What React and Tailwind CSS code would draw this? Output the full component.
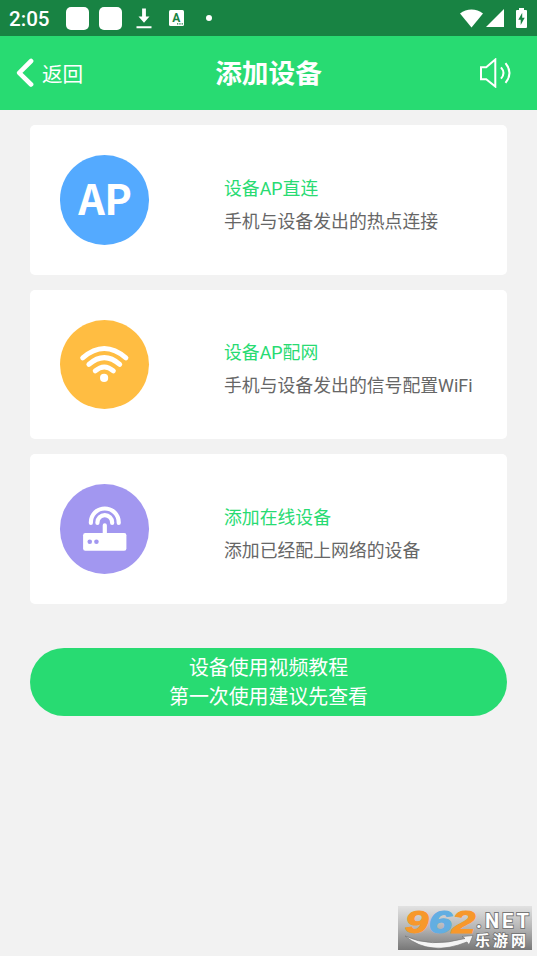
import React from "react";

function StatusBar() {
  return (
    <div className="flex h-9 items-center bg-[#188343] text-white">
      <span className="ml-[9px] w-[57px] pt-px text-[20.6px] leading-9 font-medium">2:05</span>
      <span className="size-[23px] rounded-[5px] bg-white" />
      <span className="ml-[10px] size-[23px] rounded-[5px] bg-white" />
      <svg className="ml-[14px]" width="16" height="22" viewBox="0 0 16 22" fill="white">
        <path d="M6.1 1.5h3.8v8h3.6L8 15.7 2.5 9.5h3.6zM.5 19.3h15v2H.5z" />
      </svg>
      <svg className="ml-[17px]" width="15" height="16" viewBox="0 0 15 16">
        <rect width="15" height="16" rx="1.5" fill="white" />
        <text x="3.3" y="12" fontSize="12" fontWeight="700" fill="#188343">A</text>
        <path d="M8 13.3h1.3v1.3H8zM10.3 13.3h1.3v1.3h-1.3zM12.6 13.3h1.3v1.3h-1.3z" fill="#188343" />
      </svg>
      <span className="ml-[22px] size-[6px] rounded-full bg-white" />
      <svg className="ml-auto" width="23" height="19" viewBox="0 0 23 19" fill="white">
        <path d="M0 4.4C6.6-.9 16.4-.9 23 4.4L11.5 18.5z" />
      </svg>
      <svg className="ml-[3px]" width="18" height="18" viewBox="0 0 18 18" fill="white">
        <path d="M18 0v18H0z" />
      </svg>
      <svg className="mr-[10px] ml-[12px]" width="11" height="20" viewBox="0 0 11 20">
        <path d="M3 0h5v2h2q1 0 1 1v16q0 1-1 1H1q-1 0-1-1V3q0-1 1-1h2z" fill="white" />
        <path d="M6.2 4.8v5h2.5l-4 7.2v-5.3H2.3z" fill="#188343" />
      </svg>
    </div>
  );
}

function Header() {
  return (
    <header className="grid h-[74.4px] grid-cols-[1fr_auto_1fr] items-center bg-[#28db72] text-white">
      <div className="flex items-center">
        <svg className="ml-4" width="18" height="30" viewBox="0 0 18 30" fill="none">
          <path d="M15.1 3 3.2 14.8 15.1 26.5" stroke="white" strokeWidth="4.6" strokeLinecap="round" strokeLinejoin="round" />
        </svg>
        <span className="ml-[8px] pt-[4px] text-[20.6px] leading-7">返回</span>
      </div>
      <h1 className="pt-[2px] text-[26.7px] leading-9 font-bold">添加设备</h1>
      <svg className="mr-[25px] justify-self-end" width="33" height="30" viewBox="0 0 33 30" fill="none" stroke="white" strokeWidth="2">
        <path d="M2 9.2h5.2L16.3 1.5v27L7.2 21.2H2z" />
        <path d="M22 9.3q5 5.7 0 11.4M26.5 5.2q8 9.8 0 19.6" />
      </svg>
    </header>
  );
}

function WifiIcon() {
  return (
    <svg width="90" height="90" viewBox="0 0 90 90" fill="none" stroke="white" strokeWidth="5" strokeLinecap="round">
      <path d="M22.8 38.8q21.7-18.8 43.4 0M29 45.3q15.5-13.5 31 0M35.4 52q9.1-8 18.2 0" />
      <circle cx="44.3" cy="59" r="4.1" fill="white" stroke="none" />
    </svg>
  );
}

function RouterIcon() {
  return (
    <svg width="90" height="90" viewBox="0 0 90 90" fill="none" stroke="white" strokeWidth="4.2" strokeLinecap="round">
      <path d="M31 39v-.6a14 14 0 0 1 28 0V39M37.6 39v-.6a7.4 7.4 0 0 1 14.8 0V39M45 41.3V52" />
      <rect x="23.2" y="49" width="43.5" height="17.8" rx="2.2" fill="white" stroke="none" />
      <g fill="#a297f0" stroke="none">
        <circle cx="29.9" cy="57.8" r="2.3" />
        <circle cx="36.6" cy="57.8" r="2.3" />
      </g>
    </svg>
  );
}

function Card({ color, icon, title, text }) {
  return (
    <section className="flex h-[149.4px] items-center rounded-[5px] bg-white pl-[29.6px]">
      <div className={`flex size-[89.6px] shrink-0 items-center justify-center rounded-full ${color}`}>{icon}</div>
      <div className="ml-[74.8px] flex flex-col gap-[5px] pt-[11px] text-[17.85px] leading-7 whitespace-nowrap">
        <h2 className="text-[#28db72]">{title}</h2>
        <p className="text-[#666666]">{text}</p>
      </div>
    </section>
  );
}

function Watermark() {
  return (
    <svg className="absolute right-[5px] bottom-[6px] overflow-visible" width="134" height="44" viewBox="0 0 134 44">
      <defs>
        <linearGradient id="plate" x1="0" y1="0" x2="0" y2="1">
          <stop offset="0" stopColor="#e2e2e2" />
          <stop offset="0.5" stopColor="#b5b5b5" />
          <stop offset="1" stopColor="#777777" />
        </linearGradient>
      </defs>
      <rect width="134" height="44" fill="url(#plate)" />
      <path d="M7 30q25 12 60 2.5l-3-2 11-1-4 9.5-2-3Q32 51 7 30z" fill="#f4f4f4" stroke="#777" strokeWidth="0.7" />
      <g className="font-['Liberation_Sans',sans-serif]" transform="translate(7 26.5) scale(1.36 1)">
        <text fontWeight="700" fontStyle="italic" fontSize="31" strokeWidth="1">
          <tspan fill="#f7982b" stroke="#f7982b">9</tspan>
          <tspan fill="#62aee2" stroke="#62aee2">6</tspan>
          <tspan fill="#f7982b" stroke="#f7982b">2</tspan>
        </text>
      </g>
      <g fill="white" stroke="#777777" strokeWidth="1.8" paintOrder="stroke" fontWeight="700">
        <text x="78" y="21.5" fontSize="20" textLength="53" lengthAdjust="spacing">.NET</text>
        <text x="77" y="40" fontSize="15" textLength="51">乐游网</text>
      </g>
    </svg>
  );
}

export default function App() {
  return (
    <div className="relative flex h-[956px] w-[537px] flex-col overflow-hidden bg-[#f2f2f2] font-[Roboto,'Noto_Sans_CJK_SC',sans-serif]">
      <StatusBar />
      <Header />
      <main className="flex flex-col gap-[15px] px-[30px] pt-[15px]">
        <Card
          color="bg-[#54aaff]"
          icon={<span className="pb-[5px] pl-px font-['Noto_Sans_CJK_SC',sans-serif] text-[41.5px] leading-none font-bold tracking-[-0.5px] text-white">AP</span>}
          title="设备AP直连"
          text="手机与设备发出的热点连接"
        />
        <Card color="bg-[#ffbd42]" icon={<WifiIcon />} title="设备AP配网" text="手机与设备发出的信号配置WiFi" />
        <Card color="bg-[#a297f0]" icon={<RouterIcon />} title="添加在线设备" text="添加已经配上网络的设备" />
        <button className="mt-[29.5px] flex h-[68px] flex-col items-center justify-center rounded-full bg-[#28db72] pt-[2px] text-[19.9px] leading-[29px] text-white">
          <span>设备使用视频教程</span>
          <span>第一次使用建议先查看</span>
        </button>
      </main>
      <Watermark />
    </div>
  );
}
